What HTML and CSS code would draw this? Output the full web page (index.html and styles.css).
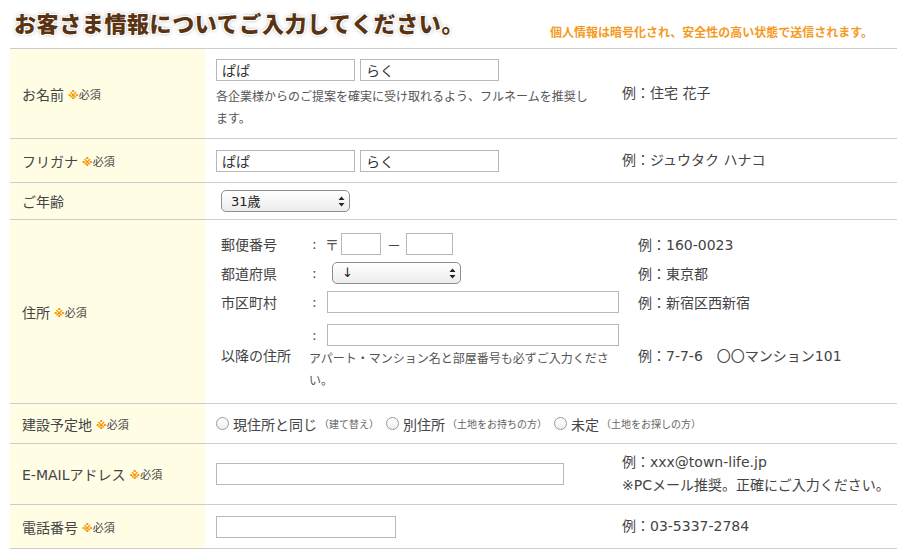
FILE: index.html
```html
<!DOCTYPE html>
<html lang="ja">

<head>
    <meta charset="UTF-8">
    <meta name="viewport" content="width=device-width, initial-scale=1.0">
    <title>お客さま情報</title>
    <link rel="stylesheet" href="styles.css">
</head>

<body>
    <div class="form-wrap">
        <div class="form-head">
            <h2 class="form-title">お客さま情報についてご入力してください。</h2>
            <p class="secure-note">個人情報は暗号化され、安全性の高い状態で送信されます。</p>
        </div>

        <!-- お名前 -->
        <div class="info-row row-name">
            <div class="label">お名前 <span class="req"><span class="req-mark">※</span>必須</span></div>
            <div class="field field-name">
                <div class="pair">
                    <input class="txt txt-half" type="text" value="ぱぱ">
                    <input class="txt txt-half" type="text" value="らく">
                </div>
                <p class="hint">各企業様からのご提案を確実に受け取れるよう、フルネームを推奨します。</p>
            </div>
            <div class="example">例：住宅 花子</div>
        </div>

        <!-- フリガナ -->
        <div class="info-row row-kana">
            <div class="label">フリガナ <span class="req"><span class="req-mark">※</span>必須</span></div>
            <div class="field">
                <div class="pair">
                    <input class="txt txt-half" type="text" value="ぱぱ">
                    <input class="txt txt-half" type="text" value="らく">
                </div>
            </div>
            <div class="example">例：ジュウタク ハナコ</div>
        </div>

        <!-- ご年齢 -->
        <div class="info-row row-age">
            <div class="label">ご年齢</div>
            <div class="field">
                <span class="select-box select-age">
                    <select class="sel">
                        <option>31歳</option>
                    </select>
                    <svg class="sel-arrows" width="7" height="11" viewBox="0 0 7 11">
                        <path d="M3.5 0.5 L6.5 4 L0.5 4 Z M3.5 10.5 L6.5 7 L0.5 7 Z" fill="#222" />
                    </svg>
                </span>
            </div>
        </div>

        <!-- 住所 -->
        <div class="info-row row-address">
            <div class="label">住所 <span class="req"><span class="req-mark">※</span>必須</span></div>
            <div class="addr-cell">
                <div class="addr-label">郵便番号</div>
                <div class="addr-input">
                    <span class="colon">:</span>
                    <span class="postal-mark">〒</span>
                    <input class="txt txt-zip1" type="text">
                    <span class="dash">－</span>
                    <input class="txt txt-zip2" type="text">
                </div>
                <div class="addr-ex">例：160-0023</div>

                <div class="addr-label">都道府県</div>
                <div class="addr-input">
                    <span class="colon">:</span>
                    <span class="select-box select-pref">
                        <select class="sel">
                            <option>↓</option>
                        </select>
                        <svg class="sel-arrows" width="7" height="11" viewBox="0 0 7 11">
                            <path d="M3.5 0.5 L6.5 4 L0.5 4 Z M3.5 10.5 L6.5 7 L0.5 7 Z" fill="#222" />
                        </svg>
                    </span>
                </div>
                <div class="addr-ex">例：東京都</div>

                <div class="addr-label">市区町村</div>
                <div class="addr-input">
                    <span class="colon">:</span>
                    <input class="txt txt-addr" type="text">
                </div>
                <div class="addr-ex">例：新宿区西新宿</div>

                <div class="addr-label addr-last">以降の住所</div>
                <div class="addr-input addr-input-last">
                    <div class="addr-line">
                        <span class="colon">:</span>
                        <input class="txt txt-addr" type="text">
                    </div>
                    <p class="hint hint-addr">アパート・マンション名と部屋番号も必ずご入力ください。</p>
                </div>
                <div class="addr-ex addr-last">例：7-7-6　〇〇マンション101</div>
            </div>
        </div>

        <!-- 建設予定地 -->
        <div class="info-row row-site">
            <div class="label">建設予定地 <span class="req"><span class="req-mark">※</span>必須</span></div>
            <div class="choice-cell">
                <label class="choice"><input class="radio" type="radio" name="site">現住所と同じ<small>（建て替え）</small></label>
                <label class="choice"><input class="radio" type="radio" name="site">別住所<small>（土地をお持ちの方）</small></label>
                <label class="choice"><input class="radio" type="radio" name="site">未定<small>（土地をお探しの方）</small></label>
            </div>
        </div>

        <!-- E-MAIL -->
        <div class="info-row row-mail">
            <div class="label">E-MAILアドレス <span class="req"><span class="req-mark">※</span>必須</span></div>
            <div class="field">
                <input class="txt txt-mail" type="text">
            </div>
            <div class="example">
                <span>例：xxx@town-life.jp</span>
                <span>※PCメール推奨。正確にご入力ください。</span>
            </div>
        </div>

        <!-- 電話番号 -->
        <div class="info-row row-tel">
            <div class="label">電話番号 <span class="req"><span class="req-mark">※</span>必須</span></div>
            <div class="field">
                <input class="txt txt-tel" type="text">
            </div>
            <div class="example">例：03-5337-2784</div>
        </div>
    </div>
</body>

</html>
```

FILE: styles.css
```css
body {
    margin: 0;
    background: #fff;
    color: #444;
    font-family: "DejaVu Sans", "Noto Sans CJK JP", sans-serif;
}

.form-wrap {
    width: 887px;
    margin-left: 10px;
}

/* heading */
.form-head {
    display: flex;
    justify-content: space-between;
    height: 48px;
    border-bottom: 1px solid #ccc;
}

.form-title {
    margin: 0;
    padding: 10px 0 0 4px;
    font-family: "Noto Sans CJK JP", sans-serif;
    font-size: 22px;
    line-height: 24px;
    font-weight: 900;
    letter-spacing: 0.6px;
    color: #5a3412;
    text-shadow: -1px -1px 0 #fff, 1px -1px 0 #fff, -1px 1px 0 #fff, 1px 1px 0 #fff,
        0 0 4px rgba(0, 0, 0, 0.45);
}

.secure-note {
    margin: 24px 24px 0 0;
    font-family: "Noto Sans CJK JP", sans-serif;
    font-size: 12px;
    line-height: 16px;
    font-weight: 700;
    color: #f59a1e;
}

/* rows */
.info-row {
    display: grid;
    grid-template-columns: 195px 405px 1fr;
    border-bottom: 1px solid #ccc;
}

.row-name { height: 89px; }
.row-kana { height: 43px; }
.row-age { height: 36px; }
.row-address { height: 183px; }
.row-site { height: 39px; }
.row-mail { height: 60px; }
.row-tel { height: 43px; }

.label {
    display: flex;
    align-items: center;
    padding-left: 12px;
    background: #fffde4;
    font-size: 14px;
}

.req {
    margin-left: 4px;
    font-size: 11px;
    color: #444;
}

.req-mark {
    color: #f39800;
    font-weight: 700;
}

.field {
    display: flex;
    flex-direction: column;
    justify-content: center;
    align-items: flex-start;
    padding: 0 11px;
}

.field-name {
    padding-top: 2px;
}

.example {
    display: flex;
    flex-direction: column;
    justify-content: center;
    padding-left: 12px;
    font-size: 14px;
    line-height: 23px;
}

.pair {
    display: flex;
    gap: 5px;
}

.hint {
    margin: 5px 0 0;
    font-size: 12px;
    line-height: 22px;
    color: #555;
}

/* inputs */
.txt {
    box-sizing: border-box;
    height: 22px;
    margin: 0;
    padding: 0 5px;
    border: 1px solid #b7b7b7;
    border-radius: 0;
    background: #fff;
    color: #333;
    font-family: inherit;
    font-size: 14px;
}

.txt-half { width: 139px; }
.txt-zip1 { width: 40px; margin-left: 2px; }
.txt-zip2 { width: 47px; }
.txt-addr { width: 292px; margin-left: 2px; }
.txt-mail { width: 348px; }
.txt-tel { width: 180px; }

/* selects */
.select-box {
    position: relative;
    display: inline-block;
    height: 22px;
}

.select-age {
    margin-left: 5px;
}

.select-pref {
    margin-left: 7px;
}

.sel {
    appearance: none;
    -webkit-appearance: none;
    box-sizing: border-box;
    width: 129px;
    height: 22px;
    margin: 0;
    padding: 0 0 0 9px;
    border: 1px solid #8e8e8e;
    border-radius: 5px;
    background: linear-gradient(#fff, #ececec);
    color: #222;
    font-family: inherit;
    font-size: 13px;
}

.sel-arrows {
    position: absolute;
    top: 6px;
    right: 5px;
    pointer-events: none;
}

/* address block */
.addr-cell {
    grid-column: 2 / 4;
    display: grid;
    grid-template-columns: 88px 310px 1fr;
    grid-template-rows: 29px 29px 29px auto;
    padding: 9px 0 0 16px;
    font-size: 14px;
}

.addr-label,
.addr-input,
.addr-ex {
    display: flex;
    align-items: center;
}

.addr-ex {
    padding-left: 19px;
}

.addr-label.addr-last,
.addr-ex.addr-last {
    align-items: flex-start;
    padding-top: 30px;
    line-height: 20px;
}

.addr-input-last {
    flex-direction: column;
    align-items: flex-start;
    padding-top: 8px;
}

.addr-line {
    display: flex;
    align-items: center;
}

.colon {
    width: 16px;
    padding-left: 3px;
    box-sizing: border-box;
    color: #555;
}

.postal-mark {
    color: #555;
}

.dash {
    margin: 0 5px 0 6px;
}

.hint-addr {
    margin-top: 2px;
}

/* radios */
.choice-cell {
    grid-column: 2 / 4;
    display: flex;
    align-items: center;
    padding-left: 11px;
    font-size: 14px;
    font-family: "Noto Sans CJK JP", sans-serif;
}

.choice {
    display: flex;
    align-items: center;
    margin-right: 7px;
}

.choice small {
    margin-left: 2px;
    font-size: 10px;
    color: #666;
}

.radio {
    appearance: none;
    -webkit-appearance: none;
    width: 13px;
    height: 13px;
    margin: 0 4px 0 0;
    border: 1px solid #9a9a9a;
    border-radius: 50%;
    background: linear-gradient(#fff, #efefef);
}
```
